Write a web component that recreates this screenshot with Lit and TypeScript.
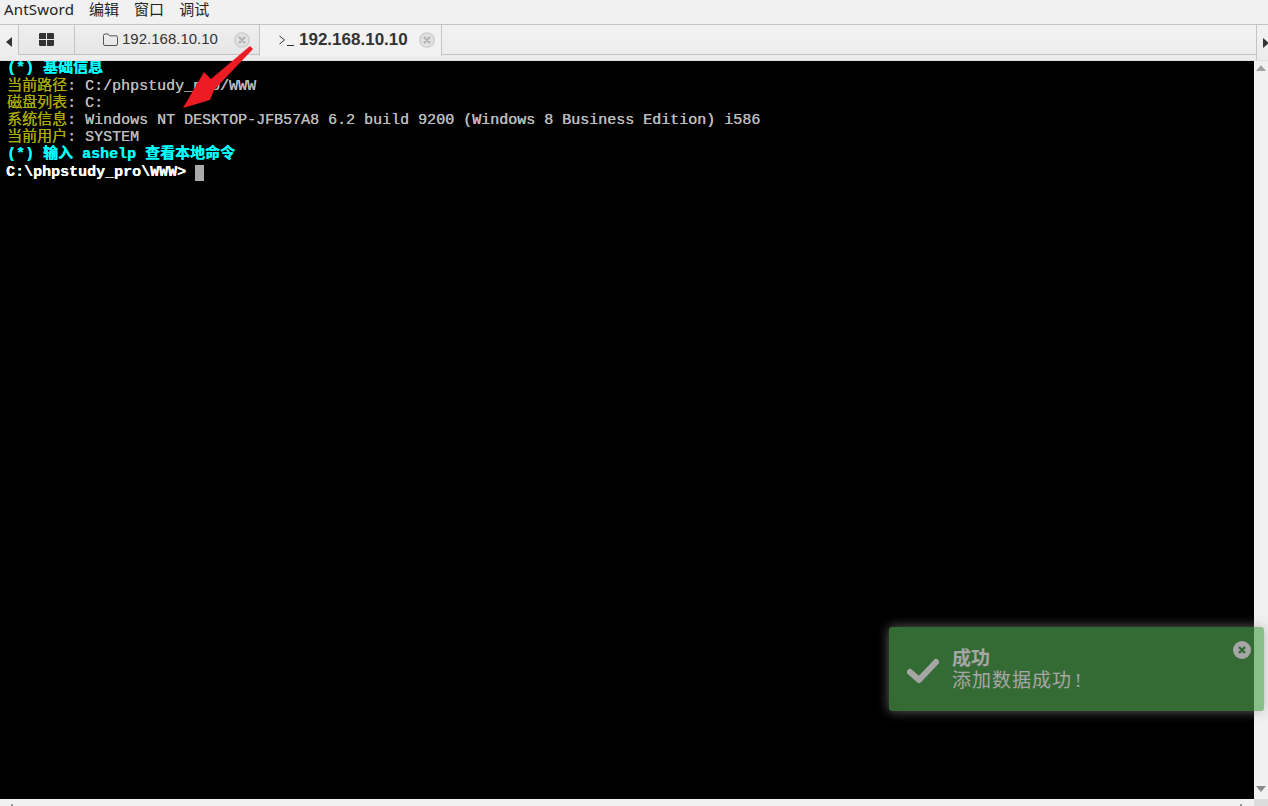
import { LitElement, html, css, svg } from "lit";
import { customElement } from "lit/decorators.js";

@customElement("app-root")
export class AppRoot extends LitElement {
  static styles = css`
    :host { display: block; width: 1268px; height: 806px; position: relative; overflow: hidden; background: #f0f0f0; }
    .menu { height: 24px; box-sizing: border-box; display: flex; gap: 15px; padding: 0 0 5px 4px; align-items: center; font: 15px/19px "Noto Sans", "Noto Sans CJK SC", sans-serif; color: #222; background: #f1f1f1; }
    .brand { letter-spacing: 0.2px; }
    .tabbar { height: 37px; box-sizing: border-box; border-top: 1px solid #c4c4c4; border-bottom: 1px solid #dedede; display: flex; background: linear-gradient(#f2f2f2, #ececec); overflow: hidden; }
    .arrow { width: 18px; height: 34px; display: flex; align-items: center; justify-content: center; flex: none; box-sizing: border-box; }
    .arrow.r { width: 12px; border-left: 1px solid #c4c4c4; margin-left: auto; height: 35px; justify-content: flex-start; padding-left: 6px; }
    .tri-l { width: 0; height: 0; border: 5px solid transparent; border-left: 0; border-right: 6px solid #333; }
    .tri-r { width: 0; height: 0; flex: none; border: 5px solid transparent; border-right: 0; border-left: 6px solid #333; }
    .strip { flex: 1; display: flex; height: 35px; position: relative; align-items: flex-start; }
    .strip::after { content: ""; position: absolute; left: 0; right: 0; top: 29px; height: 1px; background: #c4c4c4; }
    .tab { height: 29px; box-sizing: border-box; border-left: 1px solid #c4c4c4; display: flex; align-items: center; color: #333; font: 15px/27px "Liberation Sans", sans-serif; background: linear-gradient(#efefef, #e6e6e6); }
    .tab.home { width: 56px; justify-content: center; padding-right: 1px; }
    .tab.file { width: 185px; padding-left: 28px; gap: 4px; position: relative; }
    .tab.active { width: 183px; height: 31px; padding-left: 19px; gap: 5px; font-weight: bold; font-size: 17px; background: #f2f2f2; border-right: 1px solid #c4c4c4; position: relative; z-index: 1; }
    .tab span { margin-top: -2px; }
    .x { position: absolute; width: 16px; height: 16px; top: 7px; }
    .tab.file .x { left: 159px; }
    .tab.active .x { left: 159px; }
    .term { position: absolute; left: 0; top: 61px; width: 1254px; height: 738px; background: #000; overflow: hidden; color: #bbb; font: 15px/17px "Liberation Mono", "Noto Sans CJK SC", monospace; text-shadow: 0.3px 0 0 currentColor; }
    .lines { margin-top: -1px; padding-left: 7px; }
    .l { height: 17px; white-space: pre; }
    .l.first { height: 18px; }
    .c { color: #0ff; font-weight: bold; }
    .y { color: #aa0; }
    .prompt { height: 19px; margin-left: -1px; color: #fff; font-weight: bold; display: flex; align-items: center; }
    .cursor { display: inline-block; width: 9px; height: 16px; background: #aaa; margin-left: 9px; }
    .vs { position: absolute; left: 1254px; top: 61px; width: 14px; height: 738px; background: #f1f1f1; }
    .vs i { position: absolute; left: 2px; width: 0; height: 0; border: 5px solid transparent; }
    .vs .up { top: 4px; border-top: 0; border-bottom: 6px solid #a3a3a3; }
    .vs .dn { bottom: 7px; border-bottom: 0; border-top: 6px solid #8a8a8a; }
    .hs { position: absolute; left: 0; top: 799px; width: 1268px; height: 7px; background: #f1f1f1; }
    .hs b { position: absolute; right: 0; top: 0; width: 14px; height: 7px; background: #dcdcdc; }
    .hs i { position: absolute; top: 5px; width: 2px; height: 2px; background: #999; }
    .hs .tip-l { left: 11px; }
    .hs .tip-r { left: 1240px; }
    .toast { position: absolute; left: 889px; top: 627px; width: 375px; height: 84px; border-radius: 3px; background: #51a351; opacity: 0.65; color: #fff; box-shadow: 0 0 12px #999; display: flex; align-items: center; font-family: "Liberation Serif", "Noto Sans CJK SC", serif; }
    .check { margin-left: 18px; width: 32px; height: 26px; flex: none; margin-right: 13px; margin-top: 3px; }
    .t1 { font-size: 19px; font-weight: bold; line-height: 22px; }
    .t2 { font-size: 19px; line-height: 22px; letter-spacing: 1px; }
    .t2 em { font-style: normal; margin-left: 3px; }
    .tc { margin-top: 2px; }
    .close { position: absolute; left: 344px; top: 14px; width: 18px; height: 18px; }
    .arrowmark { position: absolute; left: 175px; top: 40px; width: 90px; height: 75px; }
    .ico { flex: none; display: block; }
  `;

  private xIcon() {
    return html`<svg class="x" viewBox="0 0 16 16"><circle cx="8" cy="8" r="7.2" fill="#e2e2e2" stroke="#c9c9c9" stroke-width="1.2"/><path d="M5.5 5.5l5 5M10.5 5.5l-5 5" stroke="#b4b4b4" stroke-width="2.2" stroke-linecap="round"/></svg>`;
  }

  render() {
    return html`
      <div class="menu"><span class="brand">AntSword</span><span>编辑</span><span>窗口</span><span>调试</span></div>
      <div class="tabbar">
        <div class="arrow"><span class="tri-l"></span></div>
        <div class="strip">
          <div class="tab home">
            <svg class="ico" width="15" height="13" viewBox="0 0 15 13"><path fill="#333" d="M0 1.2Q0 0 1.2 0H7v6H0zM8 0h5.8Q15 0 15 1.2V6H8zM0 7h7v6H1.200Q0 13 0 11.800zM8 7h7v4.800Q15 13 13.800 13H8z"/></svg>
          </div>
          <div class="tab file">
            <svg class="ico" width="15" height="13" viewBox="0 0 15 13"><path fill="none" stroke="#555" d="M.5 2.500Q.5 1 2 1h3l1.500 1.800H13Q14.500 2.800 14.500 4.300V11Q14.500 12.500 13 12.500H2Q.5 12.500 .5 11z"/></svg>
            <span>192.168.10.10</span>${this.xIcon()}
          </div>
          <div class="tab active">
            <svg class="ico" width="15" height="11" viewBox="0 0 15 11"><path fill="none" stroke="#333" d="M.5 1l5 4-5 4M8 10.500h7"/></svg>
            <span>192.168.10.10</span>${this.xIcon()}
          </div>
        </div>
        <div class="arrow r"><span class="tri-r"></span></div>
      </div>
      <div class="term">
        <div class="lines">
          <div class="l c first">(*) 基础信息</div>
          <div class="l"><span class="y">当前路径</span>: C:/phpstudy_pro/WWW</div>
          <div class="l"><span class="y">磁盘列表</span>: C:</div>
          <div class="l"><span class="y">系统信息</span>: Windows NT DESKTOP-JFB57A8 6.2 build 9200 (Windows 8 Business Edition) i586</div>
          <div class="l"><span class="y">当前用户</span>: SYSTEM</div>
          <div class="l c">(*) 输入 ashelp 查看本地命令</div>
          <div class="prompt"><span>C:\\phpstudy_pro\\WWW&gt;</span><span class="cursor"></span></div>
        </div>
      </div>
      <div class="vs"><i class="up"></i><i class="dn"></i></div>
      <div class="hs"><i class="tip-l"></i><i class="tip-r"></i><b></b></div>
      <div class="toast">
        <svg class="check" viewBox="0 0 32 26"><path d="M3 14l9 8L29 4" fill="none" stroke="#fff" stroke-width="6" stroke-linecap="round" stroke-linejoin="round"/></svg>
        <div class="tc"><div class="t1">成功</div><div class="t2">添加数据成功<em>!</em></div></div>
        <svg class="close" viewBox="0 0 18 18"><circle cx="9" cy="9" r="9" fill="#fff"/><path d="M6 6l6 6M12 6l-6 6" stroke="#51a351" stroke-width="2.400"/></svg>
      </div>
      <svg class="arrowmark" viewBox="0 0 90 75">${svg`<path fill="#ed1c24" d="M75 6L78 9 39 50 35 60 8 68 29 32 36 39z"/>`}</svg>
    `;
  }
}
